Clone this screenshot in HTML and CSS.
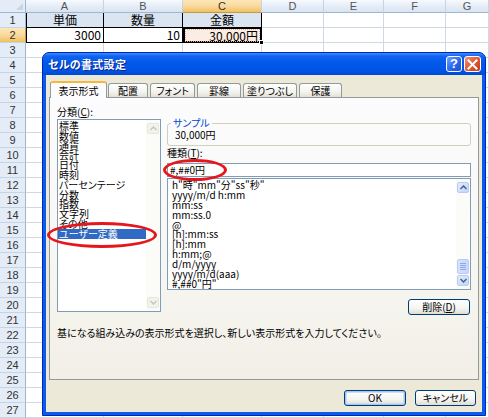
FILE: index.html
```html
<!DOCTYPE html>
<html lang="ja">
<head>
<meta charset="utf-8">
<title>セルの書式設定</title>
<link rel="stylesheet" href="styles.css">
</head>
<body>
<div class="sheet">
  <div class="corner"><span class="corner-tri"></span></div>
  <div class="colh">A</div>
  <div class="colh">B</div>
  <div class="colh sel">C</div>
  <div class="colh">D</div>
  <div class="colh">E</div>
  <div class="colh">F</div>
  <div class="colh">G</div>

  <div class="rowh">1</div>
  <div class="cell hd b bl">単価</div>
  <div class="cell hd b">数量</div>
  <div class="cell hd b">金額</div>
  <div class="cell"></div>
  <div class="cell"></div>
  <div class="cell"></div>
  <div class="cell"></div>

  <div class="rowh sel">2</div>
  <div class="cell num b bl">3000</div>
  <div class="cell num b">10</div>
  <div class="cell num active"><span class="ants">30,000円</span><span class="handle"></span></div>
  <div class="cell"></div>
  <div class="cell"></div>
  <div class="cell"></div>
  <div class="cell"></div>

  <div class="rowh-block">
    <div class="rowh">3</div><div class="rowh">4</div><div class="rowh">5</div><div class="rowh">6</div><div class="rowh">7</div>
    <div class="rowh">8</div><div class="rowh">9</div><div class="rowh">10</div><div class="rowh">11</div><div class="rowh">12</div>
    <div class="rowh">13</div><div class="rowh">14</div><div class="rowh">15</div><div class="rowh">16</div><div class="rowh">17</div>
    <div class="rowh">18</div><div class="rowh">19</div><div class="rowh">20</div><div class="rowh">21</div><div class="rowh">22</div>
    <div class="rowh">23</div><div class="rowh">24</div><div class="rowh">25</div><div class="rowh">26</div><div class="rowh">27</div>
  </div>
  <div class="filler"></div>
  <div class="filler"></div>
  <div class="filler"></div>
  <div class="filler"></div>
  <div class="filler"></div>
  <div class="filler"></div>
  <div class="filler"></div>
</div>

<div class="dialog">
  <div class="titlebar">
    <span class="title">セルの書式設定</span>
    <div class="tb-buttons">
      <span class="tb-btn help">?</span>
      <span class="tb-btn close"><svg width="11" height="11" viewBox="0 0 11 11"><path d="M1.5 1.5 L9.5 9.5 M9.5 1.5 L1.5 9.5" stroke="#fff" stroke-width="2" stroke-linecap="square"/></svg></span>
    </div>
  </div>
  <div class="dlg-body">
    <div class="tabs">
      <div class="tab active t1">表示形式</div>
      <div class="tab t2">配置</div>
      <div class="tab t3">フォント</div>
      <div class="tab t4">罫線</div>
      <div class="tab t5">塗りつぶし</div>
      <div class="tab t6">保護</div>
    </div>
    <div class="panel">
      <div class="cols">
        <div class="left">
          <div class="label">分類(<u>C</u>):</div>
          <div class="listbox cat">
            <ul class="items">
              <li>標準</li>
              <li>数値</li>
              <li>通貨</li>
              <li>会計</li>
              <li>日付</li>
              <li>時刻</li>
              <li>パーセンテージ</li>
              <li>分数</li>
              <li>指数</li>
              <li>文字列</li>
              <li>その他</li>
              <li class="selected">ユーザー定義</li>
            </ul>
            <div class="vscroll disabled">
              <span class="sb-btn"><svg width="7" height="5" viewBox="0 0 7 5"><path d="M0.5 4 L3.5 1 L6.5 4" fill="none" stroke="currentColor" stroke-width="1.5"/></svg></span>
              <span class="sb-track"></span>
              <span class="sb-btn"><svg width="7" height="5" viewBox="0 0 7 5"><path d="M0.5 1 L3.5 4 L6.5 1" fill="none" stroke="currentColor" stroke-width="1.5"/></svg></span>
            </div>
          </div>
        </div>
        <div class="right">
          <fieldset class="sample">
            <legend>サンプル</legend>
            <div class="sample-val">30,000円</div>
          </fieldset>
          <div class="label">種類(<u>T</u>):</div>
          <div class="input">#,##0円</div>
          <div class="listbox fmt">
            <ul class="items">
              <li>h"時"mm"分"ss"秒"</li>
              <li>yyyy/m/d h:mm</li>
              <li>mm:ss</li>
              <li>mm:ss.0</li>
              <li>@</li>
              <li>[h]:mm:ss</li>
              <li>[h]:mm</li>
              <li>h:mm;@</li>
              <li>d/m/yyyy</li>
              <li>yyyy/m/d(aaa)</li>
              <li>#,##0"円"</li>
            </ul>
            <div class="vscroll">
              <span class="sb-btn"><svg width="7" height="5" viewBox="0 0 7 5"><path d="M0.5 4 L3.5 1 L6.5 4" fill="none" stroke="currentColor" stroke-width="1.5"/></svg></span>
              <span class="sb-track"><span class="sb-thumb"><i></i><i></i><i></i><i></i></span></span>
              <span class="sb-btn"><svg width="7" height="5" viewBox="0 0 7 5"><path d="M0.5 1 L3.5 4 L6.5 1" fill="none" stroke="currentColor" stroke-width="1.5"/></svg></span>
            </div>
          </div>
          <div class="del-row"><button class="btn del">削除(<u>D</u>)</button></div>
        </div>
      </div>
      <p class="desc">基になる組み込みの表示形式を選択し、新しい表示形式を入力してください。</p>
    </div>
    <div class="footer">
      <button class="btn ok">OK</button>
      <button class="btn cancel">キャンセル</button>
    </div>
  </div>
</div>

<div class="mark mark1"></div>
<div class="mark mark2"></div>
</body>
</html>
```

FILE: styles.css
```css
* { box-sizing: border-box; }
html, body { margin: 0; padding: 0; }
body {
  width: 489px;
  height: 418px;
  overflow: hidden;
  position: relative;
  background: #fff;
  font-family: "Noto Sans CJK JP", "Liberation Sans", sans-serif;
  font-size: 10px;
  color: #000;
  font-feature-settings: "palt";
}

/* ---------- spreadsheet ---------- */
.sheet {
  display: grid;
  grid-template-columns: 26px 78px 79px 79px 62px 60px 62px 43px;
  grid-template-rows: 13px;
  grid-auto-rows: 15px;
}
.corner {
  background: #E4ECF7;
  border-right: 1px solid #9EB6CE;
  border-bottom: 1px solid #9EB6CE;
  position: relative;
}
.corner-tri {
  position: absolute;
  right: 2px;
  bottom: 2px;
  width: 0;
  height: 0;
  border-left: 7px solid transparent;
  border-bottom: 7px solid #C9D5E4;
}
.colh {
  background: linear-gradient(#F7FAFD, #E4ECF7 55%, #DAE4F1);
  border-right: 1px solid #C5D3E3;
  border-bottom: 1px solid #9EB6CE;
  text-align: center;
  font: 11px/12px "Liberation Sans", sans-serif;
  color: #555;
}
.colh.sel {
  background: linear-gradient(#FCE7B8, #F9D99F 50%, #F1C15F);
  border-bottom-color: #C29B4C;
  color: #333;
}
.rowh {
  background: #E4ECF7;
  border-right: 1px solid #9EB6CE;
  border-bottom: 1px solid #C5D3E3;
  text-align: center;
  font: 11px/14px "Liberation Sans", sans-serif;
  color: #333;
}
.rowh.sel {
  background: linear-gradient(#FCE7B8, #F9D99F 50%, #F1C15F);
  border-right-color: #C29B4C;
}
.rowh-block {
  grid-row: span 25;
  display: flex;
  flex-direction: column;
}
.rowh-block .rowh { height: 15px; flex: none; }

.cell {
  border-right: 1px solid #D0D7E5;
  border-bottom: 1px solid #D0D7E5;
  font: 12px/14px "Noto Sans CJK JP", sans-serif;
  padding: 0 2px;
  white-space: nowrap;
}
.cell.hd { background: #DBE5F1; text-align: center; }
.cell.b { border-right-color: #000; border-bottom-color: #000; }
.cell.bl { border-left: 1px solid #000; }
.cell.num { text-align: right; }
.cell.active {
  border: 2px solid #000;
  border-top-width: 1px;
  position: relative;
  padding: 1px 1px;
}
.ants {
  display: block;
  height: 11px;
  line-height: 11px;
  padding-right: 1px;
  background: #FBEDE3;
  outline: 1px dotted #E2A98A;
}
.handle {
  position: absolute;
  right: -4px;
  bottom: -4px;
  width: 5px;
  height: 5px;
  background: #000;
  border: 1px solid #fff;
}
.filler {
  grid-row: span 25;
  border-right: 1px solid #D0D7E5;
  background: repeating-linear-gradient(to bottom, transparent 0 14px, #D0D7E5 14px 15px);
}

/* ---------- dialog ---------- */
.dialog {
  position: absolute;
  left: 42px;
  top: 52px;
  width: 444px;
  height: 364px;
  background: #0A5CEC;
  border: 1px solid #0026B8;
  border-radius: 7px 7px 0 0;
  padding: 0 3px 3px;
  display: flex;
  flex-direction: column;
}
.titlebar {
  height: 22px;
  margin: 0 -3px;
  padding: 0 4px 0 5px;
  border-radius: 6px 6px 0 0;
  background: linear-gradient(#3A8CFF 0%, #0F63F0 15%, #0258E8 45%, #0055E5 80%, #0048D6 100%);
  display: flex;
  align-items: center;
  justify-content: space-between;
}
.title {
  color: #fff;
  font-weight: bold;
  font-size: 11px;
  letter-spacing: 0.3px;
  text-shadow: 1px 1px 0 #0A1E8C;
}
.tb-buttons { display: flex; gap: 2px; }
.tb-btn {
  width: 17px;
  height: 16px;
  border: 1px solid #fff;
  border-radius: 3px;
  display: flex;
  align-items: center;
  justify-content: center;
  color: #fff;
  font: bold 13px/14px "Liberation Sans", sans-serif;
}
.tb-btn.help { width: 16px; background: linear-gradient(135deg, #6FA2FF, #2A66EE 55%, #1E4FD6); }
.tb-btn.close { background: linear-gradient(135deg, #F29274, #E05A33 50%, #C7381A); }

.dlg-body {
  flex: 1;
  background: #ECE9D8;
  padding: 6px 3px 0;
  display: flex;
  flex-direction: column;
}
.tabs {
  display: flex;
  align-items: flex-end;
  height: 16px;
  padding-left: 1px;
  position: relative;
  z-index: 1;
}
.tab {
  height: 14px;
  margin-left: 2px;
  border: 1px solid #919B9C;
  border-bottom: none;
  border-radius: 3px 3px 0 0;
  background: linear-gradient(#FFFFFF, #F3F3EF 60%, #E3E0D5);
  text-align: center;
  font-size: 10px;
  line-height: 13px;
}
.tab.active {
  margin-left: 0;
  height: 17px;
  margin-bottom: -1px;
  background: #FCFCFE;
  border-top: 2px solid #F4B93C;
  line-height: 15px;
}
.t1 { width: 57px; }
.t2 { width: 40px; margin-left: 1px; }
.t3 { width: 45px; }
.t4 { width: 44px; }
.t5 { width: 54px; }
.t6 { width: 43px; }

.panel {
  height: 283px;
  border: 1px solid #919B9C;
  background: linear-gradient(#FCFCFE, #F7F6F1 60%, #F1EFE6);
  padding: 7px 7px 0 7px;
}
.cols { display: flex; gap: 6px; }
.left { width: 104px; }
.right { flex: 1; display: flex; flex-direction: column; }
.label { height: 14px; line-height: 14px; }

.listbox {
  border: 1px solid #7F9DB9;
  background: #fff;
  display: flex;
}
.listbox.cat { height: 193px; }
.listbox.fmt { height: 112px; margin-top: 1px; }
.items {
  list-style: none;
  margin: 0;
  padding: 0;
  flex: 1;
  line-height: 10px;
  white-space: nowrap;
  overflow: hidden;
}
.cat .items { padding-top: 1px; }
.cat .items li { padding-left: 1px; height: 9.8px; }
.fmt .items { padding: 1px 0 0 4px; }
.fmt .items li { height: 9.9px; }
.items li.selected { background: #316AC5; color: #fff; }

.vscroll {
  width: 14px;
  display: flex;
  flex-direction: column;
  padding: 3px 1px 3px 1px;
  background: #FBFBF8;
}
.sb-btn {
  height: 11px;
  border: 1px solid #B9CCF5;
  border-radius: 2px;
  background: linear-gradient(135deg, #E2EBFE, #C3D5FC);
  color: #4D6185;
  display: flex;
  align-items: center;
  justify-content: center;
}
.disabled .sb-btn {
  border-color: #E7E6DE;
  background: #F3F3EE;
  color: #C8C7BA;
}
.sb-track {
  flex: 1;
  display: flex;
  flex-direction: column;
  justify-content: flex-end;
  padding-bottom: 1px;
}
.sb-thumb {
  height: 15px;
  border: 1px solid #B9CCF5;
  border-radius: 2px;
  background: linear-gradient(90deg, #D5E2FC, #C6D7FB);
  display: flex;
  flex-direction: column;
  align-items: center;
  justify-content: center;
  gap: 1px;
}
.sb-thumb i {
  display: block;
  width: 6px;
  height: 1px;
  background: #8DA9E6;
}

.sample {
  margin: 12px 0 0;
  padding: 0 7px 4px;
  border: 1px solid #D0D0BF;
  border-radius: 3px;
  min-width: 0;
}
.sample legend {
  margin-left: -4px;
  padding: 0 2px;
  color: #0046D5;
  font-size: 10px;
  line-height: 12px;
}
.sample-val { line-height: 12px; }

.input {
  margin-top: 3px;
  height: 14px;
  border: 1px solid #7F9DB9;
  background: #fff;
  padding: 0 2px;
  line-height: 12px;
}
.del-row {
  margin-top: 9px;
  display: flex;
  justify-content: flex-end;
  padding-right: 1px;
}
.desc {
  margin: 12px 0 0;
  line-height: 12px;
}

.btn {
  height: 16px;
  border: 1px solid #003C74;
  border-radius: 3px;
  background: linear-gradient(#FFFFFF, #F4F4F0 60%, #E0DDD2);
  font-family: "Noto Sans CJK JP", "Liberation Sans", sans-serif;
  font-size: 10px;
  line-height: 14px;
  color: #000;
  padding: 0;
  font-feature-settings: "palt";
}
.btn.del { width: 62px; }
.btn.ok {
  width: 62px;
  box-shadow: inset 0 0 0 1px #A8C4F0, inset 0 0 0 2px #CEDDF7;
}
.btn.cancel { width: 61px; }
.footer {
  flex: 1;
  display: flex;
  justify-content: flex-end;
  align-items: flex-start;
  gap: 9px;
  padding: 10px 3px 0 0;
}

/* ---------- red annotation ellipses ---------- */
.mark {
  position: absolute;
  border: 3px solid #E5171C;
  border-radius: 50%;
}
.mark1 { left: 163px; top: 159px; width: 64px; height: 22px; }
.mark2 { left: 47px; top: 222px; width: 110px; height: 26px; }
```
